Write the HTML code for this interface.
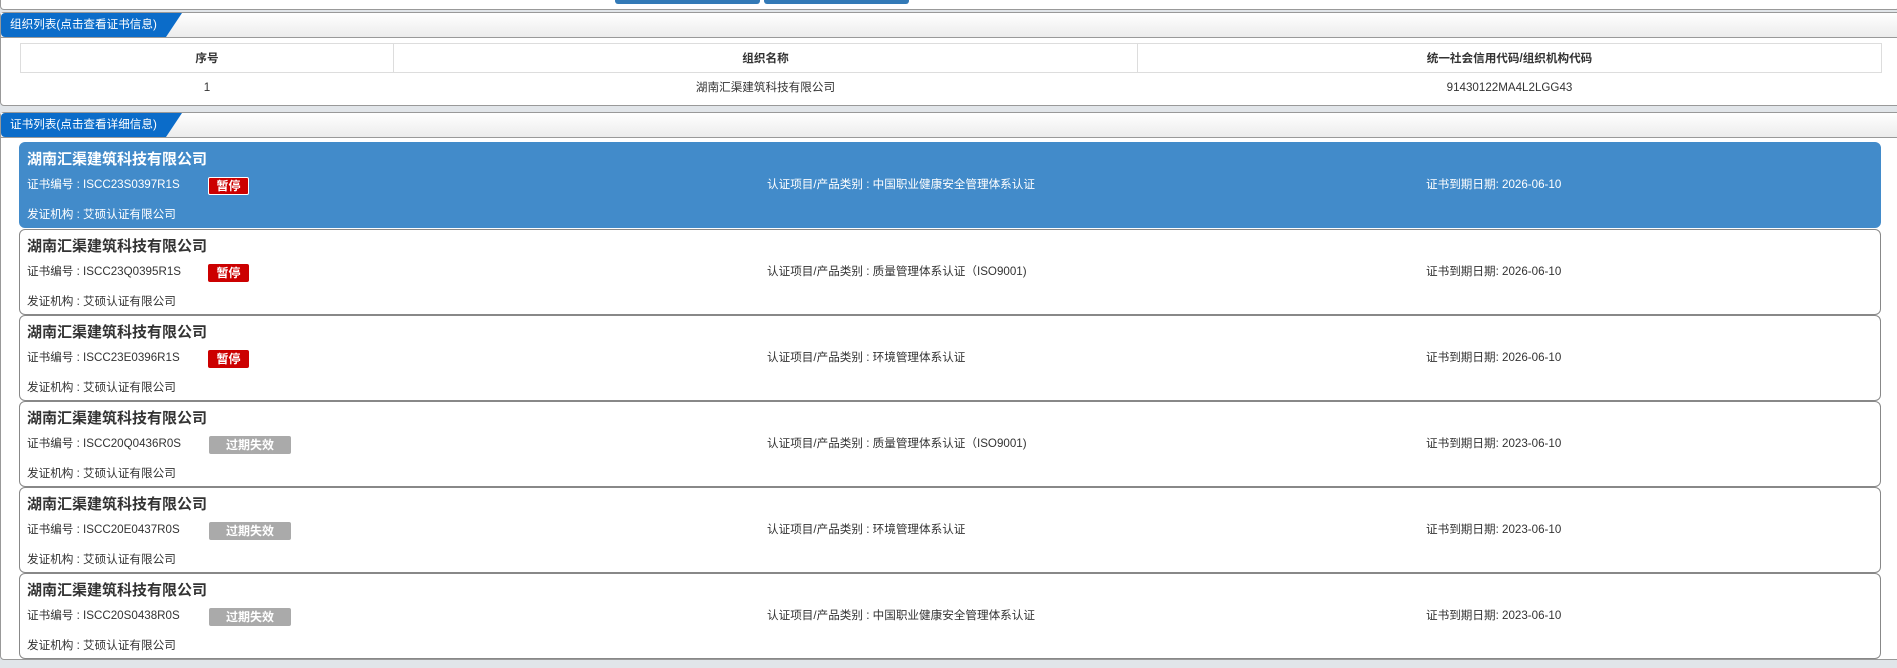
<!DOCTYPE html>
<html><head><meta charset="utf-8"><style>
*{box-sizing:border-box;margin:0;padding:0}
body{width:1897px;height:668px;background:#e1e5e9;font-family:"Liberation Sans","Noto Sans CJK SC",sans-serif;font-size:12px;color:#333;position:relative;overflow:hidden}
.top{position:absolute;left:0;top:0;width:1900px;height:10px;background:#fff;border:1px solid #999;border-top:none;border-radius:0 0 4px 4px}
.btn{position:absolute;top:0;height:4px;background:#337ab7;border-radius:0 0 3px 3px}
.panel{position:absolute;left:0;width:1905px;background:#fff;border:1px solid #999;border-radius:4px}
.hd{height:25px;border-bottom:1px solid #999;background:linear-gradient(#fff,#ececec);position:relative}
.tab{position:absolute;left:0;top:0;height:24px;width:181px;background:#0b6cc9;clip-path:polygon(0 0,181px 0,165px 24px,0 24px);border-radius:4px 0 0 4px;color:#fff;font-size:11.6px;line-height:24px;padding-left:9px}
table{position:absolute;left:19px;top:30px;width:1862px;border-collapse:collapse}
th{height:29px;border:1px solid #ddd;font-weight:bold;font-size:11.6px}
td{height:29px;text-align:center;font-size:11.6px}
.card{position:absolute;left:19px;width:1862px;height:86px;border:1px solid #888;border-radius:6px;background:#fff}
.card.sel{background:#428bca;border-color:#428bca;color:#fff}
.t{position:absolute;left:7px;top:5px;font-size:15px;font-weight:bold}
.r{position:absolute;top:34px;font-size:11.6px;line-height:16px}
.i{position:absolute;left:7px;top:63px;font-size:11.6px}
.b{position:absolute;left:188px;top:34px;height:18px;width:41px;background:#c00;color:#fff;font-weight:bold;text-align:center;line-height:18px;border-radius:2px;font-size:12px}
.sel .b{border:1px solid #fff;line-height:16px}
.g{width:82px;background:#aaa;left:189px}
</style></head><body>
<div class="top"></div>
<div class="btn" style="left:615px;width:145px"></div>
<div class="btn" style="left:764px;width:145px"></div>
<div class="panel" style="top:12px;height:94px">
<div class="hd"><div class="tab">组织列表(点击查看证书信息)</div></div>
<table><tr><th style="width:373px">序号</th><th style="width:744px">组织名称</th><th>统一社会信用代码/组织机构代码</th></tr>
<tr><td>1</td><td>湖南汇渠建筑科技有限公司</td><td>91430122MA4L2LGG43</td></tr></table>
</div>
<div class="panel" style="top:112px;height:548px">
<div class="hd"><div class="tab">证书列表(点击查看详细信息)</div></div>
</div>
<div class="card sel" style="top:142px"><div class="t">湖南汇渠建筑科技有限公司</div><div class="r" style="left:7px">证书编号 : ISCC23S0397R1S</div><div class="b">暂停</div><div class="r" style="left:747px">认证项目/产品类别 : 中国职业健康安全管理体系认证</div><div class="r" style="left:1406px">证书到期日期: 2026-06-10</div><div class="i">发证机构 : 艾硕认证有限公司</div></div>
<div class="card" style="top:229px"><div class="t">湖南汇渠建筑科技有限公司</div><div class="r" style="left:7px">证书编号 : ISCC23Q0395R1S</div><div class="b">暂停</div><div class="r" style="left:747px">认证项目/产品类别 : 质量管理体系认证（ISO9001)</div><div class="r" style="left:1406px">证书到期日期: 2026-06-10</div><div class="i">发证机构 : 艾硕认证有限公司</div></div>
<div class="card" style="top:315px"><div class="t">湖南汇渠建筑科技有限公司</div><div class="r" style="left:7px">证书编号 : ISCC23E0396R1S</div><div class="b">暂停</div><div class="r" style="left:747px">认证项目/产品类别 : 环境管理体系认证</div><div class="r" style="left:1406px">证书到期日期: 2026-06-10</div><div class="i">发证机构 : 艾硕认证有限公司</div></div>
<div class="card" style="top:401px"><div class="t">湖南汇渠建筑科技有限公司</div><div class="r" style="left:7px">证书编号 : ISCC20Q0436R0S</div><div class="b g">过期失效</div><div class="r" style="left:747px">认证项目/产品类别 : 质量管理体系认证（ISO9001)</div><div class="r" style="left:1406px">证书到期日期: 2023-06-10</div><div class="i">发证机构 : 艾硕认证有限公司</div></div>
<div class="card" style="top:487px"><div class="t">湖南汇渠建筑科技有限公司</div><div class="r" style="left:7px">证书编号 : ISCC20E0437R0S</div><div class="b g">过期失效</div><div class="r" style="left:747px">认证项目/产品类别 : 环境管理体系认证</div><div class="r" style="left:1406px">证书到期日期: 2023-06-10</div><div class="i">发证机构 : 艾硕认证有限公司</div></div>
<div class="card" style="top:573px"><div class="t">湖南汇渠建筑科技有限公司</div><div class="r" style="left:7px">证书编号 : ISCC20S0438R0S</div><div class="b g">过期失效</div><div class="r" style="left:747px">认证项目/产品类别 : 中国职业健康安全管理体系认证</div><div class="r" style="left:1406px">证书到期日期: 2023-06-10</div><div class="i">发证机构 : 艾硕认证有限公司</div></div>
</body></html>
